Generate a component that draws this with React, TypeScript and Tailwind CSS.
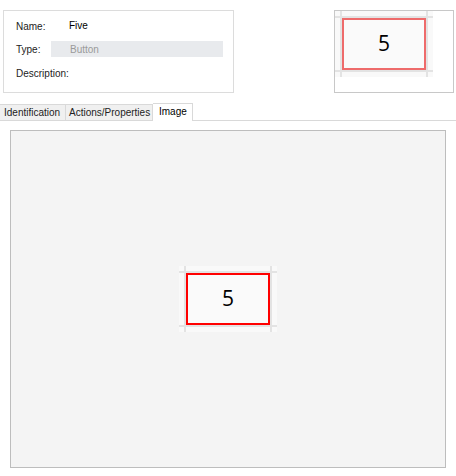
import React from "react";

function ButtonDrawing({ red, bg }: { red: string; bg: string }) {
  return (
    <div className={`relative w-[98px] h-[66px] p-[7px] ${bg}`}>
      <svg className="absolute inset-0" width="98" height="66" viewBox="0 0 98 66">
        <rect x="0" y="5" width="98" height="2" fill="#e3e3e3" />
        <rect x="0" y="59" width="98" height="2" fill="#e3e3e3" />
        <rect x="5" y="0" width="2" height="66" fill="#e3e3e3" />
        <rect x="91" y="0" width="2" height="66" fill="#e3e3e3" />
      </svg>
      <div
        className={`relative w-[84px] h-[52px] border-2 ${red} bg-[#fafafa] flex items-center justify-center text-[21px] text-black`}
        style={{ fontFamily: '"Open Sans", sans-serif' }}
      >
        5
      </div>
    </div>
  );
}

export default function App() {
  return (
    <div
      className="w-[456px] h-[476px] bg-white flex flex-col text-[10px] text-[#222]"
      style={{ fontFamily: '"Liberation Sans", Arial, sans-serif' }}
    >
      <div className="flex h-[103px] items-start">
        <div className="ml-[3px] mt-[10px] w-[231px] h-[83px] border border-[#dcdcdc] pt-[6px] pl-[12px] flex flex-col gap-[8px]">
          <div className="flex items-center h-[16px]">
            <div className="w-[35px] pt-[2px]">Name:</div>
            <div className="pl-[18px] text-black">Five</div>
          </div>
          <div className="flex items-center h-[16px]">
            <div className="w-[35px]">Type:</div>
            <div className="w-[172px] h-[16px] bg-[#e8eaed] pl-[19px] flex items-center text-[#9a9a9a]">
              Button
            </div>
          </div>
          <div className="flex items-center h-[16px]">
            <div>Description:</div>
          </div>
        </div>
        <div className="ml-auto mr-[2px] mt-[10px] w-[120px] h-[83px] border border-[#c8c8c8]">
          <ButtonDrawing red="border-[#ee6b6b]" bg="bg-[#f9f9f9]" />
        </div>
      </div>

      <div className="flex items-end h-[18px] border-b border-[#d9d9d9]">
        <div className="w-[66px] h-[16px] bg-[#f0f0f0] border-t border-r border-[#d9d9d9] pl-[4px] leading-[15px]">
          Identification
        </div>
        <div className="w-[87px] h-[16px] bg-[#f0f0f0] border-t border-r border-[#d9d9d9] pl-[3px] leading-[15px]">
          Actions/Properties
        </div>
        <div className="w-[40px] h-[18px] -mb-px bg-white border-t border-r border-[#d9d9d9] pl-[6px] leading-[16px] text-black">
          Image
        </div>
      </div>

      <div className="mt-[9px] ml-[10px] w-[436px] h-[338px] border border-[#bdbdbd] bg-[#f4f4f4] flex items-center justify-center">
        <ButtonDrawing red="border-[#ff0000]" bg="bg-[#f9f9f9]" />
      </div>
    </div>
  );
}
